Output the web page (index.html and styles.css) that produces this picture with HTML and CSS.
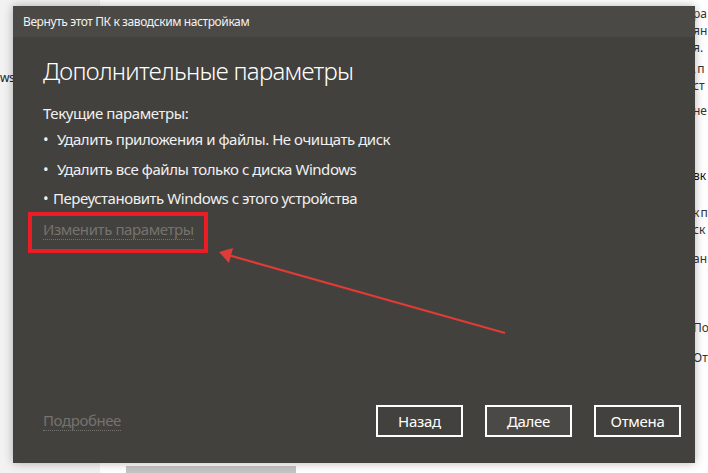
FILE: index.html
```html
<!DOCTYPE html>
<html>
<head>
    <title>Вернуть этот ПК к заводским настройкам</title>
    <meta charset="UTF-8">
    <link rel="stylesheet" href="styles.css">
</head>
<body>
    <div class="desktop">
        <div class="sidebar">
            <div class="side-line">ws</div>
        </div>
        <div class="page">
            <div class="page-text">
                <div class="para p1">ра<br>ян<br>я.</div>
                <div class="para p2">, п<br>ст</div>
                <div class="para p3">не</div>
                <div class="para p4 strong">вк</div>
                <div class="para p5">к п<br>ск</div>
                <div class="para p6">ан</div>
                <div class="para p7">По</div>
                <div class="para p8">От</div>
            </div>
            <div class="scroll-bar"></div>
        </div>

        <div class="dialog">
            <div class="title-bar">Вернуть этот ПК к заводским настройкам</div>
            <div class="dialog-body">
                <h1>Дополнительные параметры</h1>
                <div class="current">Текущие параметры:</div>
                <ul class="options">
                    <li><span class="dot">•</span>Удалить приложения и файлы. Не очищать диск</li>
                    <li><span class="dot">•</span>Удалить все файлы только с диска Windows</li>
                    <li><span class="dot narrow">•</span>Переустановить Windows с этого устройства</li>
                </ul>
                <a href="#" class="link">Изменить параметры</a>
            </div>
            <div class="dialog-footer">
                <a href="#" class="link">Подробнее</a>
                <div class="buttons">
                    <button class="btn">Назад</button>
                    <button class="btn focused">Далее</button>
                    <button class="btn">Отмена</button>
                </div>
            </div>
        </div>

        <!-- annotation -->
        <div class="mark-box"></div>
        <svg class="mark-arrow" width="708" height="473" viewBox="0 0 708 473">
            <line x1="505" y1="333" x2="228" y2="255" stroke="#e03b35" stroke-width="2.2"/>
            <polygon points="219,252 233,248 229,263" fill="#e03b35"/>
        </svg>
    </div>
</body>
</html>
```

FILE: styles.css
```css
html, body {
    margin: 0;
    padding: 0;
}
body {
    width: 708px;
    height: 473px;
    overflow: hidden;
    background: #fff;
    font-family: "Noto Sans", "Open Sans", sans-serif;
}
.desktop {
    position: relative;
    width: 708px;
    height: 473px;
    display: flex;
}
.sidebar {
    width: 100px;
    background: #f2f2f2;
    flex-shrink: 0;
}
.side-line {
    margin-top: 69px;
    font-size: 12px;
    letter-spacing: -0.5px;
    color: #222;
    line-height: 17px;
}
.page {
    flex: 1;
    display: flex;
    flex-direction: column;
    padding-left: 593px;
    position: relative;
}
.page-text {
    font-size: 12px;
    line-height: 17px;
    word-spacing: -2px;
    color: #333;
    white-space: nowrap;
}
.para.p1 { margin-top: 5px; }
.para.p2 { margin-top: 4px; }
.para.p3 { margin-top: 8px; }
.para.p4 { margin-top: 48px; color: #111; }
.para.p5 { margin-top: 20px; }
.para.p6 { margin-top: 12px; }
.para.p7 { margin-top: 52px; }
.para.p8 { margin-top: 13px; }
.scroll-bar {
    position: absolute;
    left: 26px;
    top: 466px;
    width: 170px;
    height: 8px;
    background: #c4c4c4;
}

/* dialog window */
.dialog {
    position: absolute;
    left: 13px;
    top: 6px;
    width: 682px;
    height: 457px;
    background: #43413d;
    box-shadow: 0 0 9px rgba(0,0,0,0.3);
    display: flex;
    flex-direction: column;
    color: #fff;
}
.title-bar {
    height: 31px;
    background: #4b4946;
    font-size: 12px;
    letter-spacing: -0.4px;
    line-height: 31px;
    padding-left: 10px;
    color: #f2f2f2;
}
.dialog-body {
    flex: 1;
    padding: 17px 30px 0;
}
h1 {
    margin: 0;
    font-size: 24px;
    font-weight: 300;
    letter-spacing: -0.7px;
    line-height: 34px;
    color: #fff;
}
.current {
    margin-top: 15px;
    font-size: 15px;
    letter-spacing: -0.4px;
    line-height: 20px;
    color: #f0f0f0;
}
.options {
    list-style: none;
    margin: 6px 0 0;
    padding: 0;
    font-size: 15px;
    letter-spacing: -0.45px;
    color: #f0f0f0;
}
.options li {
    line-height: 20px;
    margin-bottom: 9.5px;
}
.dot {
    display: inline-block;
    width: 14px;
}
.dot.narrow {
    width: 10px;
}
.link {
    display: inline-block;
    font-size: 15px;
    letter-spacing: -0.4px;
    line-height: 19px;
    color: #75736f;
    text-decoration: none;
    border-bottom: 1px dotted #75736f;
}
.dialog-body .link {
    margin-top: 2px;
}
.dialog-footer {
    display: flex;
    align-items: center;
    justify-content: space-between;
    padding: 0 14px 26px 30px;
}
.buttons {
    display: flex;
    gap: 22px;
}
.btn {
    width: 87px;
    height: 32px;
    background: #43413d;
    border: 2px solid #fff;
    color: #fff;
    font-family: inherit;
    font-size: 15px;
    letter-spacing: -0.3px;
    padding: 0;
}
.btn.focused {
    background: #4b4946;
}

/* annotation overlay */
.mark-box {
    position: absolute;
    left: 28px;
    top: 212px;
    width: 180px;
    height: 41px;
    box-sizing: border-box;
    border: 4px solid #ea1c24;
}
.mark-arrow {
    position: absolute;
    left: 0;
    top: 0;
    pointer-events: none;
}
```
